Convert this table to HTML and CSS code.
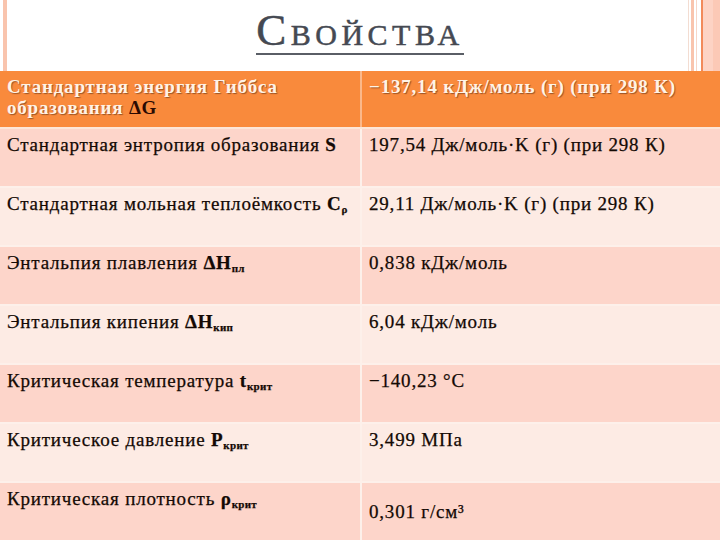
FILE: index.html
```html
<!DOCTYPE html>
<html lang="ru">
<head>
<meta charset="utf-8">
<title>Свойства</title>
<link rel="stylesheet" href="styles.css">
</head>
<body>
<div class="slide">
  <header class="top">
    <div class="left-deco"><span class="bar"></span></div>
    <div class="title-wrap"><h1 class="title"><span class="cap">С</span>войства</h1></div>
    <div class="right-deco">
      <span class="s s1"></span><span class="s s2"></span><span class="s s3"></span><span class="s s4"></span><span class="s s5"></span><span class="s s6"></span>
    </div>
  </header>
  <table class="props">
    <tr class="head">
      <td class="c1"><span class="ln">Стандартная энергия Гиббса</span><span class="ln">образования <b class="sym">ΔG</b></span></td>
      <td class="c2">−137,14 кДж/моль (г) (при 298 К)</td>
    </tr>
    <tr class="dark">
      <td class="c1">Стандартная энтропия образования <b>S</b></td>
      <td class="c2">197,54 Дж/моль·K (г) (при 298 К)</td>
    </tr>
    <tr class="light">
      <td class="c1">Стандартная мольная теплоёмкость <b>C<sub>ρ</sub></b></td>
      <td class="c2">29,11 Дж/моль·K (г) (при 298 К)</td>
    </tr>
    <tr class="dark">
      <td class="c1">Энтальпия плавления <b>ΔH<sub>пл</sub></b></td>
      <td class="c2">0,838 кДж/моль</td>
    </tr>
    <tr class="light">
      <td class="c1">Энтальпия кипения <b>ΔH<sub>кип</sub></b></td>
      <td class="c2">6,04 кДж/моль</td>
    </tr>
    <tr class="dark">
      <td class="c1">Критическая температура <b>t<sub>крит</sub></b></td>
      <td class="c2">−140,23 °C</td>
    </tr>
    <tr class="light">
      <td class="c1">Критическое давление <b>P<sub>крит</sub></b></td>
      <td class="c2">3,499 МПа</td>
    </tr>
    <tr class="dark last">
      <td class="c1">Критическая плотность <b>ρ<sub>крит</sub></b></td>
      <td class="c2 low">0,301 г/см³</td>
    </tr>
  </table>
</div>
</body>
</html>
```
FILE: styles.css
```css
html, body {
  margin: 0;
  padding: 0;
  background: #ffffff;
}
.slide {
  width: 720px;
  height: 540px;
  overflow: hidden;
  display: flex;
  flex-direction: column;
}
.top {
  height: 71px;
  display: flex;
  flex-shrink: 0;
}
.left-deco {
  width: 10px;
  padding-left: 3px;
  box-sizing: border-box;
}
.bar {
  display: block;
  width: 4px;
  height: 100%;
  background: #f9c4ad;
}
.title-wrap {
  flex: 1;
  display: flex;
  justify-content: center;
  padding-left: 22px;
}
.title {
  margin: 8px 0 0 0;
  height: 45px;
  font-family: "Liberation Serif", serif;
  font-weight: normal;
  font-size: 30px;
  line-height: 45px;
  letter-spacing: 4.5px;
  color: #454952;
  text-transform: uppercase;
  border-bottom: 2px solid #5a5e66;
  -webkit-text-stroke: 0.5px #454952;
}
.title .cap {
  font-size: 45px;
}
.right-deco {
  width: 32px;
  display: flex;
}
.s { display: block; height: 100%; }
.s1 { width: 1px; background: #f3ddd2; margin-right: 2px; }
.s2 { width: 3px; background: #f9c4ad; margin-right: 2px; }
.s3 { width: 1px; background: #f7d6c8; margin-right: 4px; }
.s4 { width: 2px; background: #f28a5a; }
.s5 { width: 10px; background: #fdd3c4; }
.s6 { flex: 1; background: #fcc9b6; }

.props {
  width: 720px;
  border-collapse: collapse;
  table-layout: fixed;
  font-family: "Liberation Serif", serif;
  font-size: 19px;
  line-height: 20px;
  letter-spacing: 0.8px;
  color: #140904;
  -webkit-text-stroke: 0.25px #140904;
}
.props td {
  vertical-align: top;
  padding: 6px 4px 0 7px;
  height: 51px;
  border-bottom: 2px solid #fdf0ea;
}
.props td.c1 {
  width: 349px;
  border-right: 2px solid #fdf0ea;
}
.ln { display: block; }
.props tr.head td {
  background: #f98a3c;
  color: #fff3e6;
  -webkit-text-stroke: 0;
  font-weight: bold;
  line-height: 21px;
  padding-top: 5px;
  text-shadow: 1px 1px 1px rgba(80, 40, 20, 0.55);
  border-bottom-color: #fde6d8;
}
.props tr.head td.c1 {
  border-right-color: #fbb88a;
}
.sym {
  color: #2a0a02;
  text-shadow: none;
}
.props tr.dark td { background: #fdd5ca; }
.props tr.light td { background: #fdebe4; }
.props tr.last td { border-bottom: none; }
.props td.low { padding-top: 19px; }
b { font-weight: bold; }
sub {
  font-size: 11px;
  font-weight: bold;
  letter-spacing: 0.3px;
  vertical-align: -3px;
  line-height: 0;
}
```
